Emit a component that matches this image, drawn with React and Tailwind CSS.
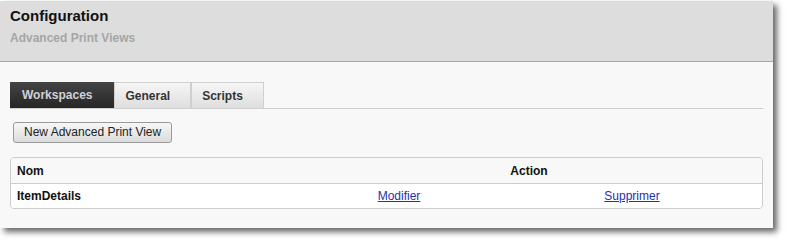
const tabs = ['Workspaces', 'General', 'Scripts'];

export default function App() {
  return (
    <div className="min-h-screen bg-white pt-px font-['Liberation_Sans',Arial,sans-serif]">
      <div className="w-[773px] bg-[#f8f8f8] shadow-[4px_4px_6px_rgba(0,0,0,0.6)]">
        <div className="h-[61px] border-b border-[#a9a9a9] bg-[#dddddd] px-[10px] pt-[6px]">
          <h1 className="text-[15px] font-bold leading-[18px] text-[#111]">Configuration</h1>
          <p className="mt-[5px] text-[12px] font-bold leading-[16px] text-[#a6a6a6]">Advanced Print Views</p>
        </div>

        <div className="px-[10px] pt-[20px] pb-[19px]">
          <div className="flex h-[27px] border-b border-[#cfcfcf]">
            {tabs.map((tab, i) =>
              i === 0 ? (
                <div
                  key={tab}
                  className="flex h-[26px] items-center bg-gradient-to-b from-[#454545] to-[#262626] pl-[12px] pr-[22px] text-[12px] font-bold text-[#cfd2d8]"
                >
                  {tab}
                </div>
              ) : (
                <div
                  key={tab}
                  className="flex h-[26px] items-center border-x border-t border-[#cfcfcf] bg-gradient-to-b from-[#f6f6f6] to-[#dedede] pl-[10px] pr-[20px] text-[12px] font-bold text-[#333]"
                >
                  {tab}
                </div>
              )
            )}
          </div>

          <button className="mt-[13px] ml-[3px] block h-[21px] rounded-[3px] border border-[#9a9a9a] bg-gradient-to-b from-[#f7f7f7] to-[#dcdcdc] px-[10px] text-[12px] leading-[19px] text-[#222]">
            New Advanced Print View
          </button>

          <div className="mt-[14px] overflow-hidden rounded-[4px] border border-[#cccccc] text-[12px] font-bold text-[#111]">
            <div className="grid h-[26px] grid-cols-[285px_1fr] items-center border-b border-[#cccccc] bg-[#f8f8f8]">
              <div className="pl-[6px]">Nom</div>
              <div className="text-center">Action</div>
            </div>
            <div className="grid h-[24px] grid-cols-[285px_206px_1fr] items-center bg-white">
              <div className="pl-[6px]">ItemDetails</div>
              <div className="text-center">
                <a href="#" className="font-normal text-[#2330b0] underline">Modifier</a>
              </div>
              <div className="text-center">
                <a href="#" className="font-normal text-[#2330b0] underline">Supprimer</a>
              </div>
            </div>
          </div>
        </div>
      </div>
    </div>
  );
}
